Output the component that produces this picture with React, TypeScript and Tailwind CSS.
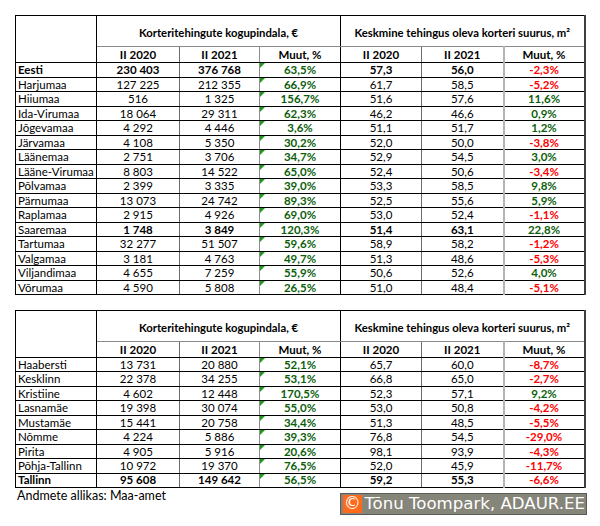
import React from "react";

type Row = {
  name: string;
  a: string;
  b: string;
  c: string;
  d: string;
  e: string;
  f: string;
  bold?: boolean;
  boldValues?: boolean;
};

const counties: Row[] = [
  { name: "Eesti", a: "230 403", b: "376 768", c: "63,5%", d: "57,3", e: "56,0", f: "-2,3%", bold: true },
  { name: "Harjumaa", a: "127 225", b: "212 355", c: "66,9%", d: "61,7", e: "58,5", f: "-5,2%" },
  { name: "Hiiumaa", a: "516", b: "1 325", c: "156,7%", d: "51,6", e: "57,6", f: "11,6%" },
  { name: "Ida-Virumaa", a: "18 064", b: "29 311", c: "62,3%", d: "46,2", e: "46,6", f: "0,9%" },
  { name: "Jõgevamaa", a: "4 292", b: "4 446", c: "3,6%", d: "51,1", e: "51,7", f: "1,2%" },
  { name: "Järvamaa", a: "4 108", b: "5 350", c: "30,2%", d: "52,0", e: "50,0", f: "-3,8%" },
  { name: "Läänemaa", a: "2 751", b: "3 706", c: "34,7%", d: "52,9", e: "54,5", f: "3,0%" },
  { name: "Lääne-Virumaa", a: "8 803", b: "14 522", c: "65,0%", d: "52,4", e: "50,6", f: "-3,4%" },
  { name: "Põlvamaa", a: "2 399", b: "3 335", c: "39,0%", d: "53,3", e: "58,5", f: "9,8%" },
  { name: "Pärnumaa", a: "13 073", b: "24 742", c: "89,3%", d: "52,5", e: "55,6", f: "5,9%" },
  { name: "Raplamaa", a: "2 915", b: "4 926", c: "69,0%", d: "53,0", e: "52,4", f: "-1,1%" },
  { name: "Saaremaa", a: "1 748", b: "3 849", c: "120,3%", d: "51,4", e: "63,1", f: "22,8%", boldValues: true },
  { name: "Tartumaa", a: "32 277", b: "51 507", c: "59,6%", d: "58,9", e: "58,2", f: "-1,2%" },
  { name: "Valgamaa", a: "3 181", b: "4 763", c: "49,7%", d: "51,3", e: "48,6", f: "-5,3%" },
  { name: "Viljandimaa", a: "4 655", b: "7 259", c: "55,9%", d: "50,6", e: "52,6", f: "4,0%" },
  { name: "Võrumaa", a: "4 590", b: "5 808", c: "26,5%", d: "51,0", e: "48,4", f: "-5,1%" },
];

const districts: Row[] = [
  { name: "Haabersti", a: "13 731", b: "20 880", c: "52,1%", d: "65,7", e: "60,0", f: "-8,7%" },
  { name: "Kesklinn", a: "22 378", b: "34 255", c: "53,1%", d: "66,8", e: "65,0", f: "-2,7%" },
  { name: "Kristiine", a: "4 602", b: "12 448", c: "170,5%", d: "52,3", e: "57,1", f: "9,2%" },
  { name: "Lasnamäe", a: "19 398", b: "30 074", c: "55,0%", d: "53,0", e: "50,8", f: "-4,2%" },
  { name: "Mustamäe", a: "15 441", b: "20 758", c: "34,4%", d: "51,3", e: "48,5", f: "-5,5%" },
  { name: "Nõmme", a: "4 224", b: "5 886", c: "39,3%", d: "76,8", e: "54,5", f: "-29,0%" },
  { name: "Pirita", a: "4 905", b: "5 916", c: "20,6%", d: "98,1", e: "93,9", f: "-4,3%" },
  { name: "Põhja-Tallinn", a: "10 972", b: "19 370", c: "76,5%", d: "52,0", e: "45,9", f: "-11,7%" },
  { name: "Tallinn", a: "95 608", b: "149 642", c: "56,5%", d: "59,2", e: "55,3", f: "-6,6%", bold: true },
];

const cell = "border-b border-b-black p-0 text-center whitespace-nowrap";

function DataTable({ rows, rowH }: { rows: Row[]; rowH: string }) {
  return (
    <table className="table-fixed border-collapse text-[11.5px] leading-none text-black">
      <colgroup>
        <col className="w-[81px]" />
        <col className="w-[83px]" />
        <col className="w-[80px]" />
        <col className="w-[81px]" />
        <col className="w-[81px]" />
        <col className="w-[82px]" />
        <col className="w-[81px]" />
      </colgroup>
      <thead>
        <tr className="h-[31px]">
          <th rowSpan={2} className="border border-black p-0" />
          <th
            colSpan={3}
            className="border-t border-t-black border-r border-r-black border-b border-b-[#8a8a8a] p-0 pt-[3px] text-[11.3px] font-bold"
          >
            Korteritehingute kogupindala, €
          </th>
          <th
            colSpan={3}
            className="border-t border-t-black border-r-2 border-r-[#404040] border-b border-b-[#8a8a8a] p-0 pt-[3px] text-[11.3px] font-bold"
          >
            Keskmine tehingus oleva korteri suurus, m²
          </th>
        </tr>
        <tr className="h-[16px] font-bold">
          <th className={`${cell} border-r border-r-[#6b6b6b]`}>II 2020</th>
          <th className={`${cell} border-r border-r-[#8c8c8c]`}>II 2021</th>
          <th className={`${cell} border-r border-r-black`}>Muut, %</th>
          <th className={`${cell} border-r border-r-[#6b6b6b]`}>II 2020</th>
          <th className={`${cell} border-r-2 border-r-[#b4b4b4]`}>II 2021</th>
          <th className={`${cell} border-r-2 border-r-[#404040]`}>Muut, %</th>
        </tr>
      </thead>
      <tbody>
        {rows.map((r) => {
          const vb = r.bold || r.boldValues ? "font-bold" : "";
          const neg = r.f.startsWith("-");
          return (
            <tr key={r.name} className={rowH}>
              <td
                className={`border-l border-l-black border-r border-r-black border-b border-b-black p-0 pl-[2px] text-left whitespace-nowrap ${
                  r.bold ? "font-bold" : ""
                }`}
              >
                {r.name}
              </td>
              <td className={`${cell} border-r border-r-[#6b6b6b] ${vb}`}>{r.a}</td>
              <td className={`${cell} border-r border-r-[#8c8c8c] ${vb}`}>{r.b}</td>
              <td className={`${cell} relative border-r border-r-black font-bold text-[#0b5e0b]`}>
                <span className="absolute left-0 top-0 h-0 w-0 border-t-[5px] border-r-[5px] border-t-[#1f9a1f] border-r-transparent" />
                {r.c}
              </td>
              <td className={`${cell} border-r border-r-[#6b6b6b] ${vb}`}>{r.d}</td>
              <td className={`${cell} border-r-2 border-r-[#b4b4b4] ${vb}`}>{r.e}</td>
              <td
                className={`${cell} border-r-2 border-r-[#404040] font-bold ${
                  neg ? "text-[#ff0000]" : "text-[#0b5e0b]"
                }`}
              >
                {r.f}
              </td>
            </tr>
          );
        })}
      </tbody>
    </table>
  );
}

export default function App() {
  return (
    <div className="h-[526px] w-[600px] bg-white pl-[15px] pt-[15px] font-['Lato','Liberation_Sans',sans-serif]">
      <DataTable rows={counties} rowH="h-[14.5px]" />
      <div className="mt-[15px]">
        <DataTable rows={districts} rowH="h-[14.44px]" />
      </div>
      <div className="flex w-[572px] items-start justify-between">
        <p className="pl-[2px] text-[12.5px] leading-[15px] text-black">Andmete allikas: Maa-amet</p>
        <div className="mt-[5px] flex h-[22px] w-[247px] items-center gap-[3px] border border-[#5a5a5a] bg-[#85857a] pl-[2px] pr-[1px]">
          <span className="flex h-[18px] w-[21px] items-center justify-center bg-[#ff6a1a] font-['DejaVu_Sans',sans-serif] text-[17px] leading-none text-white">
            ©
          </span>
          <span className="whitespace-nowrap font-['DejaVu_Sans',sans-serif] text-[16.6px] leading-none text-white">
            Tõnu Toompark, ADAUR.EE
          </span>
        </div>
      </div>
    </div>
  );
}
